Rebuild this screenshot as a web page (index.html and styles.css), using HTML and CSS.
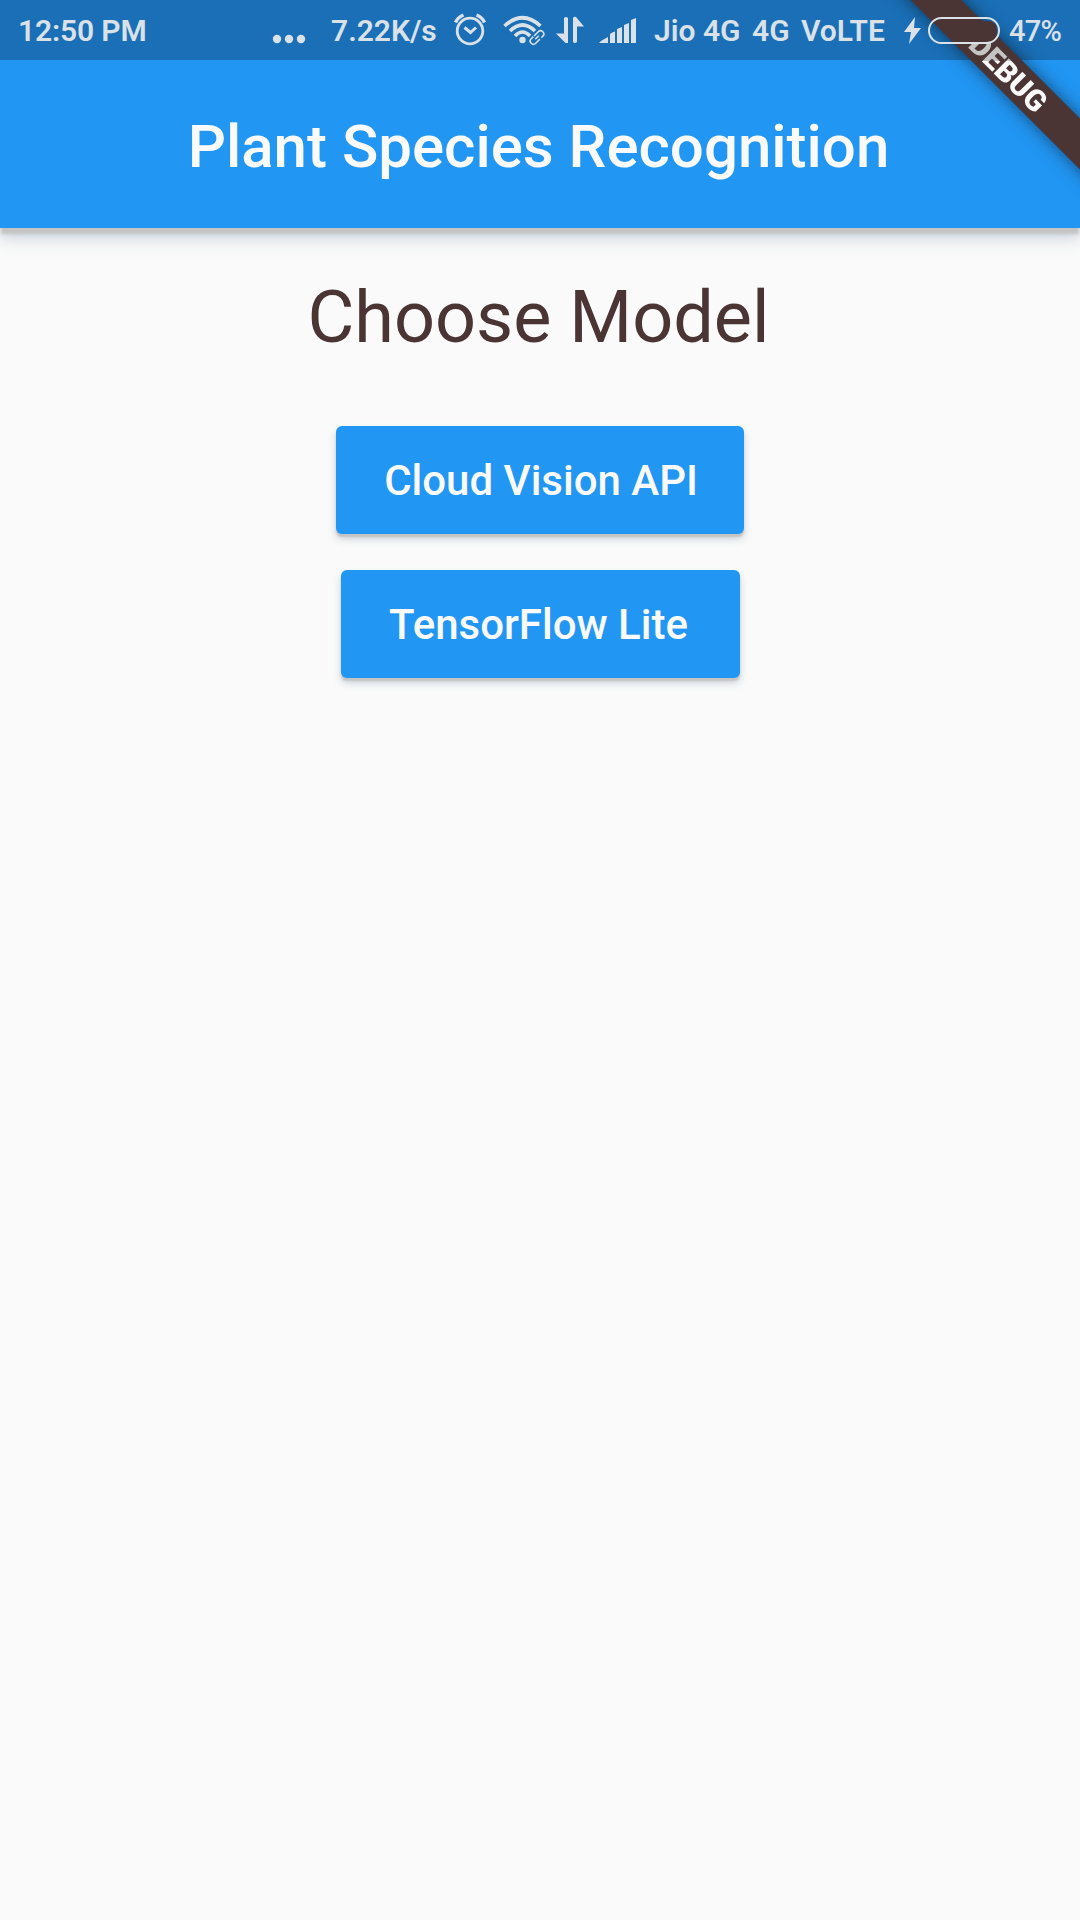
FILE: index.html
```html
<!DOCTYPE html>
<html lang="en">
<head>
<meta charset="utf-8">
<title>Plant Species Recognition</title>
<link rel="stylesheet" href="styles.css">
</head>
<body>
<div class="top">
  <div class="status">
    <span class="clock">12:50 PM</span>
    <svg class="dots" width="34" height="60" viewBox="0 0 34 60"><circle cx="5" cy="39" r="4.2"/><circle cx="17" cy="39" r="4.2"/><circle cx="29" cy="39" r="4.2"/></svg>
    <span class="speed">7.22K/s</span>
    <svg class="alarm" width="34" height="60" viewBox="0 0 34 60"><g class="line"><circle cx="17" cy="31" r="12.8" stroke-width="2.8"/><path d="M11.500 27.500l6 5 5.500-5" stroke-width="3"/><path d="M2.500 22.500Q4.500 17.500 10.500 15M31.500 22.500Q29.500 17.500 23.500 15" stroke-width="3.400"/></g></svg>
    <svg class="wifi" width="42" height="60" viewBox="0 0 42 60"><g class="line"><path d="M1.500 26Q19.500 9.500 37.500 26M7 31Q19.500 19 32 31M12 36Q19.500 28 27 36" stroke-width="3.600"/><g transform="translate(34 37.500) rotate(-45)" stroke-width="1.600"><path d="M1 3.200H-5A3.200 3.200 0 0 1-5-3.200H-2M-1-3.200H5A3.200 3.200 0 0 1 5 3.200H3M-2.500 0H2.500"/></g></g><circle cx="19.500" cy="40" r="3.200"/></svg>
    <svg class="data" width="28" height="60" viewBox="0 0 28 60"><path d="M8 18q2-2 4 0v25H9.500L0 33.500h8zM17 18q1-2 3-1l8 9.500h-7V42q-2 2-4 0z"/></svg>
    <svg class="signal" width="38" height="60" viewBox="0 0 38 60"><path d="M0 43q1-2 9-6v6zM11 34q2-2 5-2.500V43h-5zM18 29l5-2v16h-5zM25 25l5-2v20h-5zM32 20l5-2v25h-5z"/></svg>
    <span class="carrier">Jio 4G</span><span class="net">4G</span><span class="volte">VoLTE</span>
    <svg class="bolt" width="18" height="60" viewBox="0 0 18 60"><path d="M11 17L0 32h7L5 44 17 28h-7z"/></svg>
    <svg class="battery" width="72" height="27" viewBox="0 0 72 27"><path class="level" d="M8 2H47Q51 4 57 4H61Q69 5 69 13 69 25 57 25H32z"/><rect class="line" x="1" y="1" width="70" height="25" rx="12.500" stroke-width="2"/></svg>
    <span class="percent">47%</span>
  </div>
  <header class="appbar"><h1>Plant Species Recognition</h1></header>
  <div class="corner"><div class="ribbon"><span>DEBUG</span></div></div>
</div>
<main>
  <h2>Choose Model</h2>
  <button class="b1">Cloud Vision API</button>
  <button class="b2">TensorFlow Lite</button>
</main>
</body>
</html>
```
FILE: styles.css
```css
* { box-sizing: border-box; }
body { display: flex; flex-direction: column; margin: 0; width: 1080px; height: 1920px; overflow: hidden; background: #fafafa; font-family: Roboto, sans-serif; }

.top { position: relative; flex: none; height: 228px; background: linear-gradient(#1a6fb7 60px, #2196f3 60px); box-shadow: 0 7px 3px -1px #c4c4c4, 0 10px 16px #c9d2da; clip-path: inset(0 0 -40px 0); }

/* System status bar, stacked over the corner ribbon */
.status { position: relative; z-index: 2; display: flex; align-items: center; height: 60px; padding-left: 18px; color: #dae1e7; font-size: 30px; font-weight: 600; line-height: 60px; white-space: nowrap; }
.status svg { flex: none; fill: #dae1e7; }
.status .line { fill: none; stroke: #dae1e7; }
.status span { flex: none; position: relative; top: 1px; }
.clock { width: 254px; letter-spacing: -.15px; }
.dots { margin-right: 25px; }
.speed { width: 122px; }
.alarm { margin-right: 16px; }
.wifi { margin-right: 11px; }
.data { margin-right: 15px; }
.signal { margin-right: 17px; }
.carrier { width: 98px; }
.net { width: 49px; }
.volte { width: 103px; }
.bolt { margin-right: 6px; }
.battery { margin-right: 9px; }
.status .level { fill: #4a3434; }
.percent { width: 60px; font-size: 29px; font-weight: 500; letter-spacing: -.7px; }

.appbar { display: flex; align-items: center; justify-content: center; height: 168px; padding: 5px 3px 0 0; }
h1 { margin: 0; color: #fafafa; font-size: 60px; font-weight: 500; line-height: 70px; white-space: nowrap; }

/* Diagonal ribbon across the top right corner */
.corner { position: absolute; z-index: 1; top: 0; right: 0; width: 228px; height: 228px; overflow: hidden; }
.ribbon { position: absolute; left: -44px; top: 54px; width: 400px; height: 36px; background: #4a3434; box-shadow: 0 0 18px rgba(0, 0, 0, .5); font-size: 30px; font-weight: 900; line-height: 37px; text-align: center; transform: rotate(45deg); }
.ribbon span { position: relative; left: 1px; background: linear-gradient(135deg, #c4c4c4 calc(50% - 12px), #fafafa calc(50% - 12px)); background-clip: text; -webkit-background-clip: text; color: transparent; }

main { display: flex; flex-direction: column; align-items: center; }
h2 { margin: 48px 0 66px; padding-right: 3px; color: #4a3434; font-size: 72px; font-weight: 400; line-height: 84px; white-space: nowrap; }
button { height: 108px; border: 0; border-radius: 6px; padding: 2px 0 0; background: #2196f3; color: #fafafa; font: 500 42px/106px Roboto, sans-serif; box-shadow: 0 3px 2px #c4c4c4, 0 5px 8px #cbd3da; white-space: nowrap; }
.b1 { width: 408px; margin-bottom: 36px; padding-left: 2px; }
.b2 { width: 399px; padding-right: 3px; }
```
